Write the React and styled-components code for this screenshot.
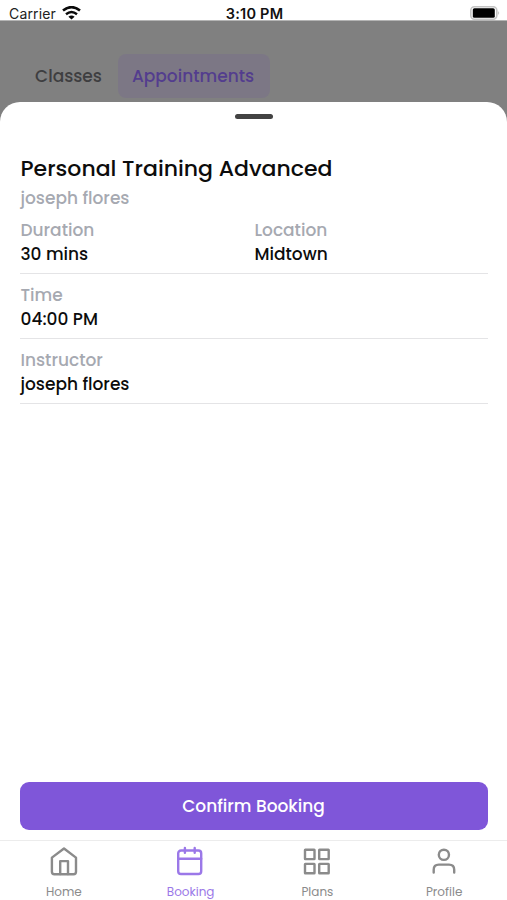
import React from "react";
import styled, { createGlobalStyle } from "styled-components";

const GlobalStyle = createGlobalStyle`
  * { box-sizing: border-box; }
  body {
    margin: 0;
    background: #fff;
    font-family: Poppins, Inter, "Liberation Sans", sans-serif;
  }
`;

const Screen = styled.div`
  display: flex;
  flex-direction: column;
  width: 507px;
  height: 900px;
  overflow: hidden;
  background: #808080;
`;

/* Status bar */
const StatusBar = styled.header`
  display: grid;
  grid-template-columns: 1fr auto 1fr;
  align-items: center;
  flex: none;
  height: 21px;
  padding: 6px 7px 0 9px;
  background: #fff;
  border-bottom: 1px solid #b4b4b4;
  color: #111;
  font-family: Inter, "Liberation Sans", sans-serif;
`;

const Carrier = styled.div`
  display: flex;
  align-items: center;
  gap: 6px;
  font-size: 14px;
  line-height: 15px;
  letter-spacing: 0.15px;
  color: #222;
`;

const Clock = styled.div`
  font-size: 14.5px;
  font-weight: 600;
  line-height: 15px;
  letter-spacing: 0.25px;
`;

const WifiIcon = styled.svg`
  margin-top: -2px;
`;

const BatteryIcon = styled.svg`
  justify-self: end;
  margin-top: -2px;
`;

/* Dimmed page behind the sheet */
const TabRow = styled.nav`
  display: flex;
  flex: none;
  height: 81px;
  padding: 33px 20px 0 19px;
`;

const Tab = styled.div`
  height: 44px;
  padding: 0 16px 0 ${(p) => (p.$active ? 14 : 16)}px;
  border-radius: 8px;
  background: ${(p) => (p.$active ? "#7c7785" : "transparent")};
  color: ${(p) => (p.$active ? "#533d8e" : "#3e3e40")};
  font-size: 17px;
  font-weight: 500;
  line-height: 45px;
  white-space: nowrap;
`;

/* Sheet */
const Sheet = styled.main`
  display: flex;
  flex: 1;
  flex-direction: column;
  padding: 12px 19px 10px 20px;
  border-radius: 20px 20px 0 0;
  background: #fff;
`;

const Handle = styled.div`
  align-self: center;
  width: 38px;
  height: 5px;
  border-radius: 3px;
  background: #434343;
`;

const Title = styled.h1`
  margin: 34px 0 0;
  padding-left: 0.5px;
  color: #0c0c0c;
  font-size: 22px;
  font-weight: 500;
  line-height: 32px;
`;

const Subtitle = styled.p`
  margin: 1px 0 0;
  padding-left: 0.5px;
  color: #a6a9b1;
  font-size: 17px;
  font-weight: 500;
  line-height: 24px;
`;

const Details = styled.div`
  margin-top: -1px;
`;

const DetailRow = styled.section`
  display: grid;
  grid-template-columns: 1fr 1fr;
  height: 65px;
  padding: 8px 0;
  border-bottom: 1px solid #e4e4e6;
`;

const Cell = styled.div`
  padding-left: 0.5px;
  font-size: 17px;
  font-weight: 500;
`;

const Label = styled.div`
  color: #a6a9b1;
  line-height: 26px;
`;

const Value = styled.div`
  color: #0c0c0c;
  line-height: 22px;
`;

const ConfirmButton = styled.button`
  height: 48px;
  margin-top: auto;
  padding: 0 1px 0 0;
  border: 0;
  border-radius: 9px;
  background: #7f56d9;
  color: #fff;
  font-family: inherit;
  font-size: 17px;
  font-weight: 500;
  line-height: 48px;
`;

/* Bottom navigation */
const BottomNav = styled.nav`
  display: grid;
  grid-template-columns: repeat(4, 1fr);
  flex: none;
  height: 60px;
  padding-top: 5px;
  border-top: 1px solid #ececec;
  background: #fff;
`;

const NavItem = styled.div`
  display: flex;
  flex-direction: column;
  align-items: center;
  color: ${(p) => (p.$active ? "#9b78e8" : "#8b8b8b")};
`;

const NavIcon = styled.svg`
  display: block;
  width: 30px;
  height: 30px;
  margin-left: 0.5px;
  fill: none;
  stroke: currentColor;
  stroke-width: 2.4;
  stroke-linecap: round;
  stroke-linejoin: round;
`;

const NavLabel = styled.span`
  margin-top: 7px;
  padding-left: 1px;
  font-size: 12px;
  line-height: 17px;
`;

const details = [
  [
    { label: "Duration", value: "30 mins" },
    { label: "Location", value: "Midtown" },
  ],
  [{ label: "Time", value: "04:00 PM" }],
  [{ label: "Instructor", value: "joseph flores" }],
];

const navItems = [
  {
    label: "Home",
    icon: (
      <>
        <path d="M2.9 11.6 L15 2.5 L27 11.6 V25.8 Q27 28.3 24.5 28.3 H5.4 Q2.9 28.3 2.9 25.8 Z" />
        <path d="M11.2 28 V15.1 H19 V28" />
      </>
    ),
  },
  {
    label: "Booking",
    active: true,
    icon: (
      <>
        <rect x="3.2" y="4.5" width="23" height="23.5" rx="2.8" />
        <path d="M3.2 12.7 H26.2 M9.9 2 V6.7 M19.7 2 V6.7" />
      </>
    ),
  },
  {
    label: "Plans",
    icon: (
      <>
        <rect x="3" y="3.7" width="9.5" height="9.4" rx="0.3" />
        <rect x="17.2" y="3.7" width="9.5" height="9.4" rx="0.3" />
        <rect x="3" y="17.9" width="9.5" height="9.4" rx="0.3" />
        <rect x="17.2" y="17.9" width="9.5" height="9.4" rx="0.3" />
      </>
    ),
  },
  {
    label: "Profile",
    icon: (
      <>
        <circle cx="14.9" cy="8.8" r="5.1" />
        <path d="M4.7 26.6 V23.7 Q4.7 18.6 9.8 18.6 H20 Q25.2 18.6 25.2 23.7 V26.6" />
      </>
    ),
  },
];

export default function App() {
  return (
    <>
      <GlobalStyle />
      <Screen>
        <StatusBar>
          <Carrier>
            Carrier
            <WifiIcon width="19" height="14" viewBox="0 0 19 14" fill="none" stroke="#0a0a0a">
              <path d="M1 4.6 Q9.5 -2.3 18 4.6" strokeWidth="2.6" />
              <path d="M4 8.2 Q9.5 3.7 15 8.2" strokeWidth="2.4" />
              <path d="M9.5 13.6 L6.4 10.8 Q9.5 8.3 12.6 10.8 Z" fill="#0a0a0a" stroke="none" />
            </WifiIcon>
          </Carrier>
          <Clock>3:10 PM</Clock>
          <BatteryIcon width="30" height="14" viewBox="0 0 30 14">
            <rect x="0.8" y="0.8" width="26" height="12.4" rx="3.6" fill="#fff" stroke="#c4c4c4" strokeWidth="1.6" />
            <rect x="2.8" y="2.2" width="22" height="9.6" rx="1.6" fill="#000" />
            <path d="M28.4 5 Q30 7 28.4 9 Z" fill="#aaa" />
          </BatteryIcon>
        </StatusBar>

        <TabRow>
          <Tab>Classes</Tab>
          <Tab $active>Appointments</Tab>
        </TabRow>

        <Sheet>
          <Handle />
          <Title>Personal Training Advanced</Title>
          <Subtitle>joseph flores</Subtitle>
          <Details>
            {details.map((row) => (
              <DetailRow key={row[0].label}>
                {row.map((cell) => (
                  <Cell key={cell.label}>
                    <Label>{cell.label}</Label>
                    <Value>{cell.value}</Value>
                  </Cell>
                ))}
              </DetailRow>
            ))}
          </Details>
          <ConfirmButton>Confirm Booking</ConfirmButton>
        </Sheet>

        <BottomNav>
          {navItems.map((item) => (
            <NavItem key={item.label} $active={item.active}>
              <NavIcon viewBox="0 0 30 30">{item.icon}</NavIcon>
              <NavLabel>{item.label}</NavLabel>
            </NavItem>
          ))}
        </BottomNav>
      </Screen>
    </>
  );
}
